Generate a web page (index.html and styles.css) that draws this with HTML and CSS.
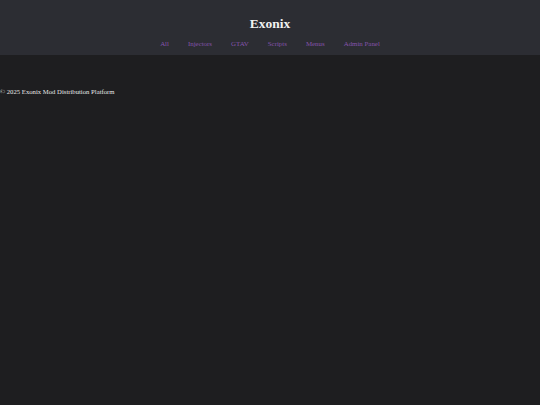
FILE: index.html
```html
<!DOCTYPE html>
<html lang="en">
<head>
<meta charset="utf-8">
<title>Exonix</title>
<link rel="stylesheet" href="styles.css">
</head>
<body>
<header class="site-header">
  <h1 class="brand">Exonix</h1>
  <nav class="nav">
    <a href="#">All</a>
    <a href="#">Injectors</a>
    <a href="#">GTAV</a>
    <a href="#">Scripts</a>
    <a href="#">Menus</a>
    <a href="#">Admin Panel</a>
  </nav>
</header>
<main class="content"></main>
<footer class="site-footer">© 2025 Exonix Mod Distribution Platform</footer>
</body>
</html>
```
FILE: styles.css
```css
html, body {
  margin: 0;
  padding: 0;
  background: #1e1e20;
  color: #e6e6e6;
  font-family: "Liberation Serif", "Times New Roman", serif;
  min-height: 100%;
}
.site-header {
  background: #2c2d33;
  padding: 16px 0 7px;
  text-align: center;
}
.brand {
  margin: 0;
  font-size: 13.5px;
  line-height: 16px;
  font-weight: bold;
  color: #f2f2f2;
}
.nav {
  margin-top: 7px;
  display: flex;
  justify-content: center;
  gap: 19px;
  font-size: 6.9px;
  line-height: 9px;
}
.nav a {
  color: #8553ab;
  text-decoration: none;
}
.content {
  height: 33px;
}
.site-footer {
  font-size: 6.7px;
  line-height: 8px;
  color: #e6e6e6;
}
```
